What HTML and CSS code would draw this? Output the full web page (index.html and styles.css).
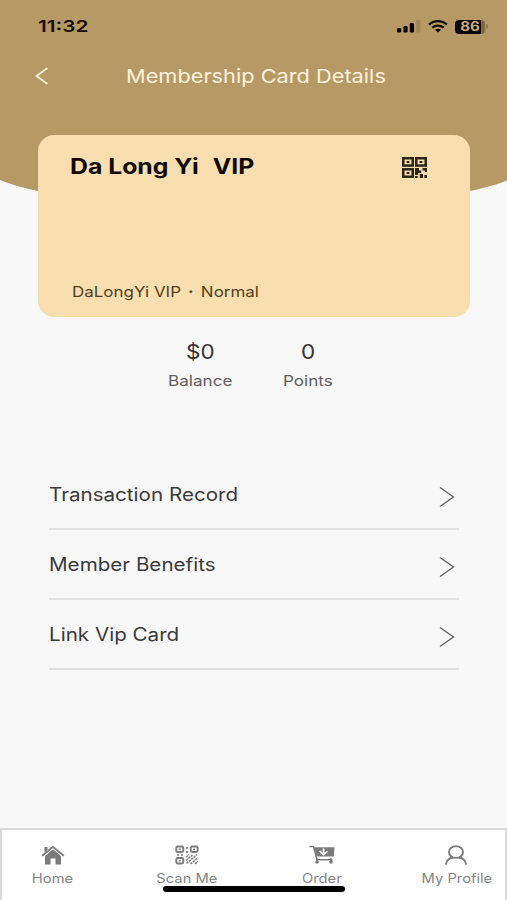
FILE: index.html
```
<!DOCTYPE html>
<html lang="en">
<head>
<meta charset="utf-8">
<title>Membership Card Details</title>
<link rel="stylesheet" href="styles.css">
</head>
<body>
<div class="screen">
  <header class="hero">
    <div class="status">
      <span class="wide time">11:32</span>
      <div class="indicators">
        <svg class="signal" viewBox="0 0 24 13"><g fill="#080401"><rect x="0" y="8" width="4.2" height="4.6" rx="1.3"/><rect x="6.4" y="6" width="4.2" height="6.6" rx="1.3"/><rect x="12.8" y="3" width="4.2" height="9.6" rx="1.3"/></g><rect x="19.3" y="0" width="4" height="12.6" rx="1.3" fill="#a08657"/></svg>
        <svg class="wifi" viewBox="0 0 20 13" fill="none" stroke="#080401" stroke-width="2.3"><path d="M1 4.6C6-.1 14-.1 19 4.6"/><path d="M4.3 7.7C7.6 4.9 12.4 4.9 15.7 7.7"/><path d="M7 9.7Q10 7.7 13 9.7L10 12.6Z" fill="#080401" stroke="none"/></svg>
        <div class="battery"><span class="charge">86</span></div>
        <i class="battery-tip"></i>
      </div>
    </div>
    <div class="titlebar">
      <svg class="back" viewBox="0 0 14 18" fill="none" stroke="#fff3df" stroke-width="1.7"><path d="M12.5 1L1.5 9L12.5 17"/></svg>
      <h1 class="wide title">Membership Card Details</h1>
    </div>
  </header>

  <section class="card">
    <div class="card-top">
      <h2 class="wide brand">Da Long Yi&nbsp; <span class="vip">VIP</span></h2>
      <svg class="qr" viewBox="0 0 25 21" fill="none" stroke="#2e2415" stroke-width="2.5"><rect x="1.25" y="1.25" width="9.5" height="7.3"/><rect x="14.25" y="1.25" width="9.5" height="7.3"/><rect x="1.25" y="12.3" width="9.5" height="7.4"/><g fill="#2e2415" stroke="none"><path d="M4.6 3.9h2.8v2H4.6zM17.6 3.9h2.8v2h-2.8zM4.6 15h2.8v2H4.6zM13 11h4v2.5h2.2v2.6h-3v2h-3.200zM20.500 11h4.500v4h-2.200v-1.500h-2.300zM17.800 17h3.200v4h-3.200zM22.300 18h2.700v3h-2.700zM13 19h2.700v2h-2.700z"/></g></svg>
    </div>
    <p class="wide tier">DaLongYi VIP <span class="dot">·</span> Normal</p>
  </section>

  <section class="stats">
    <div class="stat"><span class="wide amount">$0</span><span class="wide label">Balance</span></div>
    <div class="stat"><span class="wide amount">0</span><span class="wide label">Points</span></div>
  </section>

  <nav class="menu">
    <a class="row"><span class="wide item">Transaction Record</span><svg class="chevron" viewBox="0 0 16 22"><path d="M1 1.5L14.5 11L1 20.5"/></svg></a>
    <a class="row"><span class="wide item">Member Benefits</span><svg class="chevron" viewBox="0 0 16 22"><path d="M1 1.5L14.5 11L1 20.5"/></svg></a>
    <a class="row"><span class="wide item">Link Vip Card</span><svg class="chevron" viewBox="0 0 16 22"><path d="M1 1.5L14.5 11L1 20.5"/></svg></a>
  </nav>

  <footer class="tabs">
    <a class="tab"><svg viewBox="0 0 24 20" fill="#7b7b7b"><path d="M3.5 2h3v3L3.5 7.5z"/><path d="M12 4.2L20 11V19.5H14.5V13.5H9.5V19.5H4V11Z"/><path d="M1.2 10.8L12 1.8L22.8 10.8" fill="none" stroke="#7b7b7b" stroke-width="1.8"/></svg><span class="wide">Home</span></a>
    <a class="tab"><svg viewBox="0 0 24 20" fill="none" stroke="#7b7b7b" stroke-width="1.9"><rect x="1.3" y="1.5" width="7" height="5.5" rx="1.5"/><rect x="15.7" y="1.5" width="7" height="5.5" rx="1.5"/><rect x="1.3" y="13" width="7" height="5.5" rx="1.500"/><path d="M3.8 4.3h2M18.2 4.3h2M3.8 15.8h2" stroke-width="1.6"/><path d="M12 2v2M12 6v2M2 10h2M6 10h2" stroke-width="1.7"/><path d="M11 12l3-2.5M11 15.500l7-6M11.500 18.500L22 9.500M15.500 19l7.500-6.400M20 19l3-2.600" stroke-width="1.500" stroke-dasharray="2.400 .7"/></svg><span class="wide">Scan Me</span></a>
    <a class="tab"><svg class="cart" viewBox="0 0 26 20" fill="none" stroke="#7b7b7b" stroke-width="1.5"><path d="M.5 1.5H4.5L8 14.7H23.5"/><path d="M5 2.200H25.500L24.800 11.500H7.500Z" fill="#7b7b7b" stroke="none"/><path d="M14.500 3.500V9M10.500 6L14.500 9.700L18.500 6" stroke="#fff" stroke-width="1.700"/><g fill="#7b7b7b" stroke="none"><circle cx="8" cy="17" r="1.800"/><circle cx="22" cy="17" r="1.800"/><path d="M7 13.500h2v3H7zM21 13.500h2v3h-2z"/></g></svg><span class="wide">Order</span></a>
    <a class="tab"><svg viewBox="0 0 24 20" fill="none" stroke="#7b7b7b" stroke-width="1.9"><ellipse cx="12" cy="7" rx="7" ry="5.9"/><path d="M1.800 19.600C2.500 15.500 5.500 13 9 12.500M22.200 19.600C21.500 15.500 18.500 13 15 12.500"/></svg><span class="wide">My Profile</span></a>
    <div class="home-indicator"></div>
  </footer>
</div>
</body>
</html>
```
FILE: styles.css
```
* { box-sizing: border-box; margin: 0; padding: 0; }
body { background: #f8f8f8; font-family: Inter, "Liberation Sans", sans-serif; color: #3c3c3c; }
.screen { width: 507px; height: 900px; display: flex; flex-direction: column; overflow: hidden; position: relative; isolation: isolate; }
.wide { display: block; width: max-content; white-space: nowrap; transform: scaleX(1.15); transform-origin: 0 50%; }

.hero { height: 135px; position: relative; flex: none; }
.hero::before { content: ""; position: absolute; z-index: -1; top: 0; left: -21.5px; width: 550px; height: 209px; background: #b69964; border-radius: 0 0 50% 50% / 0 0 47px 47px; }
.status { display: flex; justify-content: space-between; height: 52px; padding: 16px 19px 0 38px; }
.time { font-size: 16.5px; font-weight: 600; line-height: 20px; color: #140b02; transform: scaleX(1.26); }
.indicators { display: flex; align-items: flex-start; padding-top: 4px; }
.signal { width: 24px; height: 13px; margin-right: 7px; }
.wifi { width: 20px; height: 13px; margin-right: 7px; }
.battery { width: 30px; height: 14px; border-radius: 4px; background: linear-gradient(90deg, #080401 26px, #80683f 26px); }
.battery-tip { width: 2px; height: 5px; margin: 4px 0 0 1px; border-radius: 0 2px 2px 0; background: #927a50; }
.charge { display: block; text-align: center; font-size: 12.5px; font-weight: 700; line-height: 14px; color: #c9ad79; transform: scaleX(1.2); }
.titlebar { display: flex; align-items: center; height: 48px; padding-left: 35px; }
.back { width: 14px; height: 18px; margin-right: 77px; }
.title { font-size: 19px; font-weight: 400; line-height: 24px; margin-top: 2px; color: #fff3df; transform: scaleX(1.145); }

.card { flex: none; width: 432px; height: 182px; margin-left: 38px; border-radius: 16px; background: #f9deaf; padding: 19px 43px 15px 32px; display: flex; flex-direction: column; justify-content: space-between; }
.card-top { display: flex; justify-content: space-between; align-items: flex-start; }
.brand { font-size: 21px; font-weight: 700; line-height: 25px; color: #0e0903; transform: scaleX(1.18); }
.vip { margin-left: 2px; }
.qr { width: 25px; height: 21px; margin-top: 3px; }
.tier { font-size: 14.5px; line-height: 20px; margin-left: 2px; color: #513e20; transform: scaleX(1.17); }
.dot { padding: 0 2px; font-weight: 700; }

.stats { display: flex; height: 143px; padding: 23px 0 0 168px; gap: 50px; flex: none; }
.stat { display: flex; flex-direction: column; align-items: flex-start; gap: 7px; width: 64.5px; }
.amount { font-size: 19.5px; line-height: 24px; margin-left: 18px; color: #333; }
.label { font-size: 14.5px; line-height: 20px; color: #5e5e5e; transform: scaleX(1.18); }

.menu { flex: none; padding: 0 48px 0 49px; }
.row { display: flex; justify-content: space-between; align-items: center; height: 70px; border-bottom: 2px solid #e2e2e2; padding-right: 4px; }
.item { font-size: 18px; line-height: 24px; margin-top: 1px; color: #3a3a3a; transform: scaleX(1.145); }
.chevron { width: 16px; height: 22px; margin-top: 5px; fill: none; stroke: #636363; stroke-width: 1.4; }

.tabs { position: relative; margin-top: auto; height: 72px; flex: none; background: #fff; border: 2px solid #d9d9d9; border-bottom: 0; display: flex; justify-content: space-between; padding: 15px 18px 0 20px; }
.tab { display: flex; flex-direction: column; align-items: center; width: 61px; }
.tab svg { width: 24px; height: 20px; }
.tab .cart { width: 26px; }
.tab span { font-size: 12.5px; line-height: 16px; margin-top: 6px; color: #858585; transform: scaleX(1.18); transform-origin: 50% 50%; }
.home-indicator { position: absolute; left: 161px; top: 56px; width: 182px; height: 6px; border-radius: 3px; background: #000; }
```
